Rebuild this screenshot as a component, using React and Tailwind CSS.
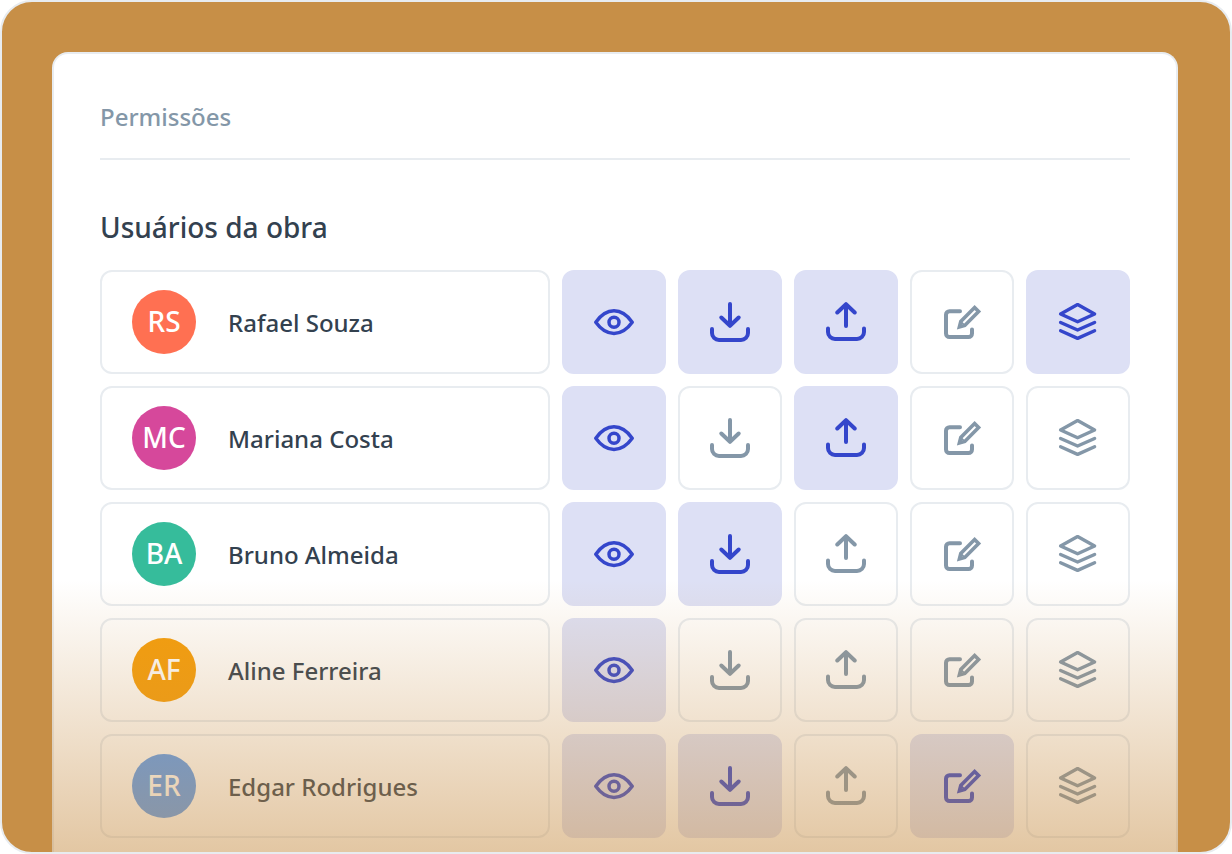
import React, { useState } from 'react';

const USERS = [
  { name: 'Rafael Souza', initials: 'RS', color: 'bg-[#ff7052]', permissions: ['view', 'download', 'upload', 'layers'] },
  { name: 'Mariana Costa', initials: 'MC', color: 'bg-[#d6489b]', permissions: ['view', 'upload'] },
  { name: 'Bruno Almeida', initials: 'BA', color: 'bg-[#36bc9b]', permissions: ['view', 'download'] },
  { name: 'Aline Ferreira', initials: 'AF', color: 'bg-[#f59e0b]', permissions: ['view'] },
  { name: 'Edgar Rodrigues', initials: 'ER', color: 'bg-[#5a9cf2]', permissions: ['view', 'download', 'edit'] },
];

const Icon = ({ strokeWidth, children }) => (
  <svg viewBox="0 0 40 40" className="size-10" fill="none" stroke="currentColor" strokeWidth={strokeWidth}
    strokeLinecap="round" strokeLinejoin="round" aria-hidden="true">
    {children}
  </svg>
);

const ViewIcon = () => (
  <Icon strokeWidth={3.5}>
    <path d="M1.8 20.2C6.5 13.5 12.5 8.8 20 8.8S33.5 13.5 38.2 20.2C33.5 26.8 27.5 31.4 20 31.4S6.5 26.8 1.8 20.2Z" />
    <circle cx="20" cy="20.2" r="5" />
  </Icon>
);

const DownloadIcon = () => (
  <Icon strokeWidth={4}>
    <path d="M2 27v4a7 7 0 0 0 7 7h22a7 7 0 0 0 7-7v-4" />
    <path d="M20 2v21M11.3 15.5l8.700 8.300 8.700-8.300" />
  </Icon>
);

const UploadIcon = () => (
  <Icon strokeWidth={4}>
    <path d="M2 26.5V30a7 7 0 0 0 7 7h22a7 7 0 0 0 7-7v-3.5" />
    <path d="M20 24V3M11.3 10.500L20 2.200l8.700 8.300" />
  </Icon>
);

const EditIcon = () => (
  <Icon strokeWidth={4}>
    <path d="M18 9.2H7.5A3.5 3.5 0 0 0 4 12.7v18.8A3.5 3.5 0 0 0 7.5 35h19a3.5 3.5 0 0 0 3.5-3.5V27.5" />
    <path strokeWidth={3.6} strokeLinejoin="miter" d="M32.6 5.600L36.600 9.600L22.800 23.400L17.400 25L18.800 19.400Z" />
    <path strokeWidth={1.8} d="M18.800 19.600L22.400 23.200" />
  </Icon>
);

const LayersIcon = () => (
  <Icon strokeWidth={3.4}>
    <path d="M19.6 2.600L36.600 12L19.600 19.800L2.600 12Z" />
    <path d="M2.600 20.500L19.600 28L36.600 20.500" />
    <path d="M2.600 28.800L19.600 36.400L36.600 28.800" />
  </Icon>
);

const PERMISSIONS = [
  { id: 'view', label: 'Visualizar', icon: ViewIcon },
  { id: 'download', label: 'Baixar', icon: DownloadIcon },
  { id: 'upload', label: 'Enviar', icon: UploadIcon },
  { id: 'edit', label: 'Editar', icon: EditIcon },
  { id: 'layers', label: 'Camadas', icon: LayersIcon },
];

export default function App() {
  const [users, setUsers] = useState(USERS);

  const togglePermission = (name, id) => setUsers(prev => prev.map(u => {
    if (u.name !== name) return u;
    const has = u.permissions.includes(id);
    return { ...u, permissions: has ? u.permissions.filter(p => p !== id) : [...u.permissions, id] };
  }));

  return (
    <main className="min-h-screen flex flex-col rounded-[32px] border-2 border-[#e8ecf0] bg-[#c78f47] pl-[50px] pr-[52px] pt-[50px] overflow-hidden font-['Noto_Sans',sans-serif] text-[#33414f]">
      <div className="relative flex-1 rounded-t-2xl border-2 border-b-0 border-[#e8ecf0] bg-white px-[46px] pt-[45px] pb-[14px]">
        <h1 className="border-b-2 border-[#e8ecf0] pb-[23px] text-2xl leading-9 font-medium text-[#8497a8]">Permissões</h1>
        <h2 className="pt-[47px] pb-[23px] text-[28px] leading-10 font-medium">Usuários da obra</h2>

        <ul className="flex flex-col gap-3">
          {users.map(user => (
            <li key={user.name} className="grid grid-cols-[1fr_repeat(5,104px)] gap-3">
              <div className="flex items-center gap-8 h-[104px] rounded-xl border-2 border-[#e8ecf0] px-[30px]">
                <span className={`flex items-center justify-center size-16 rounded-full pb-0.5 text-[28px] leading-10 font-medium text-white ${user.color}`}>
                  {user.initials}
                </span>
                <span className="pt-0.5 text-2xl leading-9 font-medium">{user.name}</span>
              </div>
              {PERMISSIONS.map(({ id, label, icon: PermissionIcon }) => {
                const active = user.permissions.includes(id);
                return (
                  <button key={id} type="button" aria-label={`${label}: ${user.name}`} aria-pressed={active}
                    onClick={() => togglePermission(user.name, id)}
                    className={`flex items-center justify-center rounded-xl border-2 cursor-pointer ${active ? 'border-[#dde0f5] bg-[#dde0f5] text-[#3446cb]' : 'border-[#e8ecf0] text-[#8497a8]'}`}>
                    <PermissionIcon />
                  </button>
                );
              })}
            </li>
          ))}
        </ul>

        {/* Fade at the bottom of the list */}
        <div className="absolute -inset-x-0.5 bottom-0 h-68 bg-linear-to-b from-[#c78f47]/0 to-[#c78f47]/50 pointer-events-none"></div>
      </div>
    </main>
  );
}
